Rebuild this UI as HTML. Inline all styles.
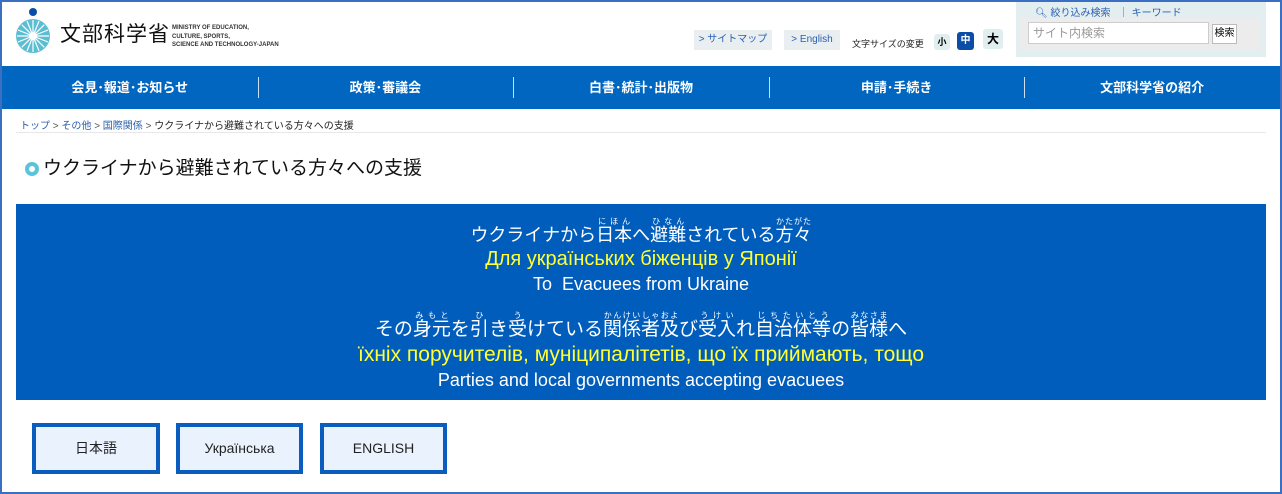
<!DOCTYPE html>
<html><head><meta charset="utf-8"><style>
*{margin:0;padding:0;box-sizing:border-box}
body{width:1282px;height:494px;overflow:hidden;background:#fff;font-family:"Liberation Sans","Noto Sans CJK JP",sans-serif;position:relative}
.frame{position:absolute;left:0;top:0;width:1282px;height:494px;border:2px solid #3b6fc4;z-index:10;pointer-events:none}
.abs{position:absolute;white-space:nowrap}
.nav{position:absolute;left:2px;top:66px;width:1278px;height:43px;background:#0066c0;display:flex}
.nav div{flex:1;color:#fff;font-size:13px;font-weight:bold;text-align:center;line-height:43px;position:relative}
.nav div+div:before{content:"";position:absolute;left:0;top:11px;height:21px;border-left:1px solid #cfe0f4}
.btn{position:absolute;top:423px;height:51px;border:4px solid #0a5cbf;background:#eaf3fd;font-size:14px;text-align:center;line-height:43px;color:#222}
.bn{position:absolute;left:16px;top:204px;width:1250px;height:196px;background:#005dbb;color:#fff;text-align:center}
.bn .l{position:absolute;left:0;width:100%;white-space:nowrap}
ruby{ruby-position:over}
rt{font-size:8px;letter-spacing:0}
.y{color:#ffff33}
</style></head><body>
<div class="frame"></div>
<svg class="abs" style="left:16px;top:7px" width="38" height="48" viewBox="0 0 38 48">
<circle cx="17" cy="5" r="4" fill="#0a4ea8"/>
<circle cx="17" cy="29" r="17" fill="#5bbdd1"/>
<g stroke="#fff" stroke-width="1.2">
<line x1="17" y1="13" x2="17" y2="45"/><line x1="1" y1="29" x2="33" y2="29"/>
<line x1="5.7" y1="17.7" x2="28.3" y2="40.3"/><line x1="28.3" y1="17.7" x2="5.7" y2="40.3"/>
<line x1="11" y1="14" x2="23" y2="44"/><line x1="23" y1="14" x2="11" y2="44"/>
<line x1="2" y1="23" x2="32" y2="35"/><line x1="32" y1="23" x2="2" y2="35"/></g>
<circle cx="17" cy="29" r="4" fill="#fff"/>
</svg>
<div class="abs" style="left:60px;top:21px;font-size:21px;letter-spacing:1px;color:#111;line-height:28px">文部科学省</div>
<div class="abs" style="left:172px;top:24px;font-size:6px;font-weight:bold;line-height:8.5px;color:#333">MINISTRY OF EDUCATION,<br>CULTURE, SPORTS,<br>SCIENCE AND TECHNOLOGY-JAPAN</div>
<div class="abs" style="left:694px;top:30px;width:78px;height:20px;background:#e9eef0;font-size:10px;color:#2b5fb0;line-height:20px;text-align:center">&gt; サイトマップ</div>
<div class="abs" style="left:784px;top:30px;width:56px;height:20px;background:#e9eef0;font-size:10px;color:#2b5fb0;line-height:20px;text-align:center">&gt; English</div>
<div class="abs" style="left:852px;top:37px;font-size:9px;color:#222">文字サイズの変更</div>
<div class="abs" style="left:934px;top:34px;width:16px;height:16px;background:#e1eef0;font-size:9px;font-weight:bold;line-height:16px;text-align:center;border-radius:3px">小</div>
<div class="abs" style="left:957px;top:32px;width:17px;height:18px;background:#0a4ea8;color:#fff;font-size:10px;font-weight:bold;line-height:18px;text-align:center;border-radius:3px">中</div>
<div class="abs" style="left:983px;top:29px;width:20px;height:20px;background:#e1eef0;font-size:12px;font-weight:bold;line-height:20px;text-align:center;border-radius:3px">大</div>
<div class="abs" style="left:1016px;top:2px;width:250px;height:55px;background:#e3eef0"></div>
<div class="abs" style="left:1020px;top:18px;width:240px;height:32px;background:#ececec"></div>
<div class="abs" style="left:1035px;top:4px;font-size:10px;color:#2b5fb0">🔍︎ 絞り込み検索 &nbsp;&nbsp;｜ キーワード</div>
<div class="abs" style="left:1028px;top:22px;width:181px;height:22px;border:1px solid #ccc;background:#fff;font-size:12px;color:#999;line-height:20px;padding-left:4px">サイト内検索</div>
<div class="abs" style="left:1212px;top:24px;width:25px;height:20px;border:1px solid #bbb;background:#fff;font-size:10px;line-height:18px;text-align:center">検索</div>
<div class="nav"><div>会見･報道･お知らせ</div><div>政策･審議会</div><div>白書･統計･出版物</div><div>申請･手続き</div><div>文部科学省の紹介</div></div>
<div class="abs" style="left:20px;top:117px;font-size:10px;color:#2b5fb0">トップ <span style="color:#555">&gt;</span> その他 <span style="color:#555">&gt;</span> 国際関係 <span style="color:#555">&gt;</span> <span style="color:#222">ウクライナから避難されている方々への支援</span></div>
<div class="abs" style="left:16px;top:132px;width:1250px;height:1px;background:#e8e8e8"></div>
<div class="abs" style="left:25px;top:162px;width:14px;height:14px;border-radius:50%;background:#5bc4d8"></div>
<div class="abs" style="left:29px;top:166px;width:6px;height:6px;border-radius:50%;background:#fff"></div>
<div class="abs" style="left:43px;top:156px;font-size:19px;color:#111;line-height:26px">ウクライナから避難されている方々への支援</div>
<div class="bn">
<div class="l" style="top:13px;font-size:18px;line-height:28px">ウクライナから<ruby>日本<rt>にほん</rt></ruby>へ<ruby>避難<rt>ひなん</rt></ruby>されている<ruby>方々<rt>かたがた</rt></ruby></div>
<div class="l y" style="top:44px;font-size:20px">Для українських біженців у Японії</div>
<div class="l" style="top:70px;font-size:18px">To&nbsp; Evacuees from Ukraine</div>
<div class="l" style="top:107px;font-size:19px;line-height:28px">その<ruby>身元<rt>みもと</rt></ruby>を<ruby>引<rt>ひ</rt></ruby>き<ruby>受<rt>う</rt></ruby>けている<ruby>関係者及<rt>かんけいしゃおよ</rt></ruby>び<ruby>受入<rt>うけい</rt></ruby>れ<ruby>自治体等<rt>じちたいとう</rt></ruby>の<ruby>皆様<rt>みなさま</rt></ruby>へ</div>
<div class="l y" style="top:139px;font-size:21px">їхніх поручителів, муніципалітетів, що їх приймають, тощо</div>
<div class="l" style="top:166px;font-size:18px">Parties and local governments accepting evacuees</div>
</div>
<div class="btn" style="left:32px;width:128px">日本語</div>
<div class="btn" style="left:176px;width:127px">Українська</div>
<div class="btn" style="left:320px;width:127px">ENGLISH</div>
</body></html>
